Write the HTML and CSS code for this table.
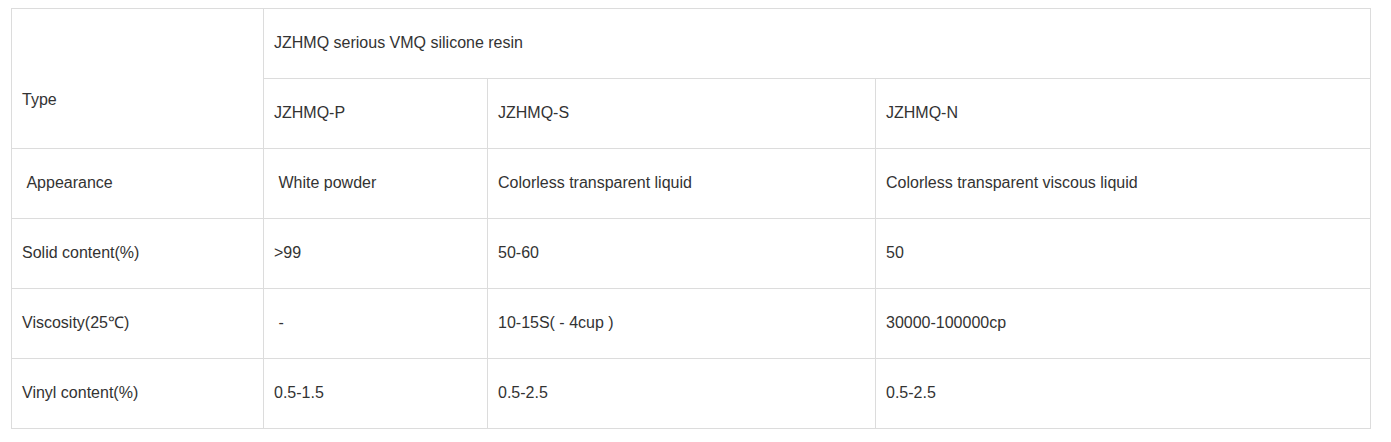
FILE: index.html
```html
<!DOCTYPE html>
<html>
<head>
<meta charset="utf-8">
<link rel="stylesheet" href="styles.css">
</head>
<body>
<div class="wrap">
<table class="spec">
  <colgroup>
    <col class="c1"><col class="c2"><col class="c3"><col class="c4">
  </colgroup>
  <tbody>
    <tr>
      <td rowspan="2" class="type">Type</td>
      <td colspan="3">JZHMQ serious VMQ silicone resin</td>
    </tr>
    <tr>
      <td>JZHMQ-P</td>
      <td>JZHMQ-S</td>
      <td>JZHMQ-N</td>
    </tr>
    <tr>
      <td>&nbsp;Appearance</td>
      <td>&nbsp;White powder</td>
      <td>Colorless transparent liquid</td>
      <td>Colorless transparent viscous liquid</td>
    </tr>
    <tr>
      <td>Solid content(%)</td>
      <td>&gt;99</td>
      <td>50-60</td>
      <td>50</td>
    </tr>
    <tr>
      <td>Viscosity(25℃)</td>
      <td>&nbsp;-</td>
      <td>10-15S( - 4cup )</td>
      <td>30000-100000cp</td>
    </tr>
    <tr>
      <td>Vinyl content(%)</td>
      <td>0.5-1.5</td>
      <td>0.5-2.5</td>
      <td>0.5-2.5</td>
    </tr>
  </tbody>
</table>
</div>
</body>
</html>
```

FILE: styles.css
```css
html, body {
  margin: 0;
  padding: 0;
  background: #fff;
}
.wrap {
  padding: 8px 0 0 11px;
}
.spec {
  border-collapse: collapse;
  table-layout: fixed;
  width: 1359px;
  font-family: "Liberation Sans", Arial, sans-serif;
  font-size: 16px;
  color: #333;
}
.c1 { width: 252px; }
.c2 { width: 224px; }
.c3 { width: 388px; }
.c4 { width: 495px; }
.spec td {
  border: 1px solid #dcdcdc;
  height: 70px;
  padding: 0 10px 2px;
  box-sizing: border-box;
  vertical-align: middle;
  text-align: left;
  line-height: 20px;
}
.spec td.type {
  padding-top: 44px;
}
```
